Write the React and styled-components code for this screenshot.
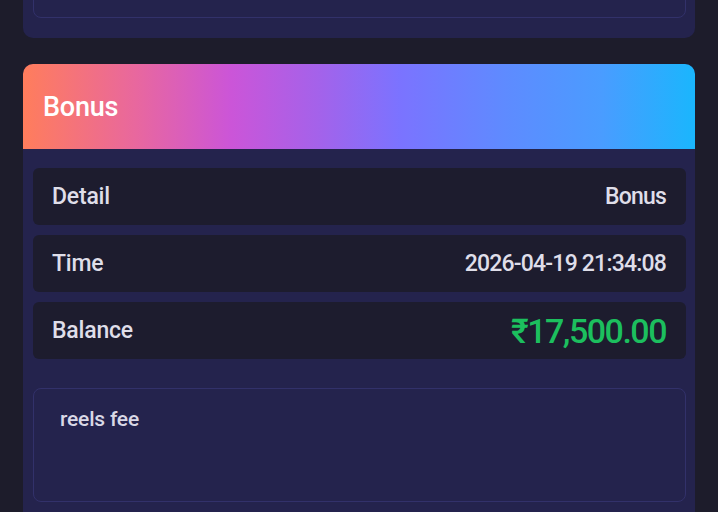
import React from 'react';
import styled, { createGlobalStyle } from 'styled-components';

const GlobalStyle = createGlobalStyle`
  html, body {
    margin: 0;
    padding: 0;
    background: #1d1c2b;
    font-family: Roboto, "Liberation Sans", sans-serif;
  }
`;

const Page = styled.div`
  height: 512px;
  overflow: hidden;
  padding: 0 23px;
  display: flex;
  flex-direction: column;
`;

const Card = styled.div`
  background: #24234d;
  border-radius: 10px;
`;

const TopCard = styled(Card)`
  margin-top: -63px;
  padding: 10px 9px 20px 10px;
`;

const OutlineBox = styled.div`
  border: 1px solid #32316a;
  border-radius: 8px;
  height: ${({ h }) => h}px;
  box-sizing: border-box;
  padding: ${({ pad }) => pad || '0'};
  color: #d9d8e6;
  font-size: 21px;
  font-weight: 500;
  letter-spacing: -0.2px;
`;

const BonusCard = styled(Card)`
  margin-top: 26px;
  border-radius: 10px 10px 0 0;
  flex: 1;
  display: flex;
  flex-direction: column;
`;

const Header = styled.div`
  height: 85px;
  border-radius: 10px 10px 0 0;
  background: linear-gradient(
    90deg,
    #ff7d5c 0%,
    #e8679f 17%,
    #cb55d8 31%,
    #a462ea 44%,
    #7b73ff 56%,
    #5e8bff 72%,
    #4a9cff 86%,
    #1ab6fd 100%
  );
  display: flex;
  align-items: center;
  padding-left: 20px;
  color: #ffffff;
  font-size: 27px;
  font-weight: 500;
  letter-spacing: -0.2px;
`;

const Body = styled.div`
  padding: 19px 9px 0 10px;
  display: flex;
  flex-direction: column;
  gap: 10px;
`;

const Row = styled.div`
  height: 57px;
  background: #1d1c2e;
  border-radius: 6px;
  display: flex;
  align-items: center;
  justify-content: space-between;
  padding: 0 20px 0 19px;
  color: #dfdee9;
  font-size: 23px;
  font-weight: 500;
  letter-spacing: -0.2px;
`;

const Value = styled.span`
  color: ${({ green }) => (green ? '#1cbf5e' : '#dfdee9')};
  font-size: ${({ green }) => (green ? '34px' : '23px')};
  letter-spacing: ${({ green }) => (green ? '-1.5px' : '-0.8px')};
`;

const NoteWrap = styled.div`
  margin-top: 19px;
`;

const rows = [
  { label: 'Detail', value: 'Bonus' },
  { label: 'Time', value: '2026-04-19 21:34:08' },
  { label: 'Balance', value: '₹17,500.00', green: true },
];

export default function App() {
  return (
    <>
      <GlobalStyle />
      <Page>
        <TopCard>
          <OutlineBox h={71} />
        </TopCard>
        <BonusCard>
          <Header>Bonus</Header>
          <Body>
            {rows.map((r) => (
              <Row key={r.label}>
                <span>{r.label}</span>
                <Value green={r.green}>{r.value}</Value>
              </Row>
            ))}
            <NoteWrap>
              <OutlineBox h={114} pad="18px 26px">reels fee</OutlineBox>
            </NoteWrap>
          </Body>
        </BonusCard>
      </Page>
    </>
  );
}
